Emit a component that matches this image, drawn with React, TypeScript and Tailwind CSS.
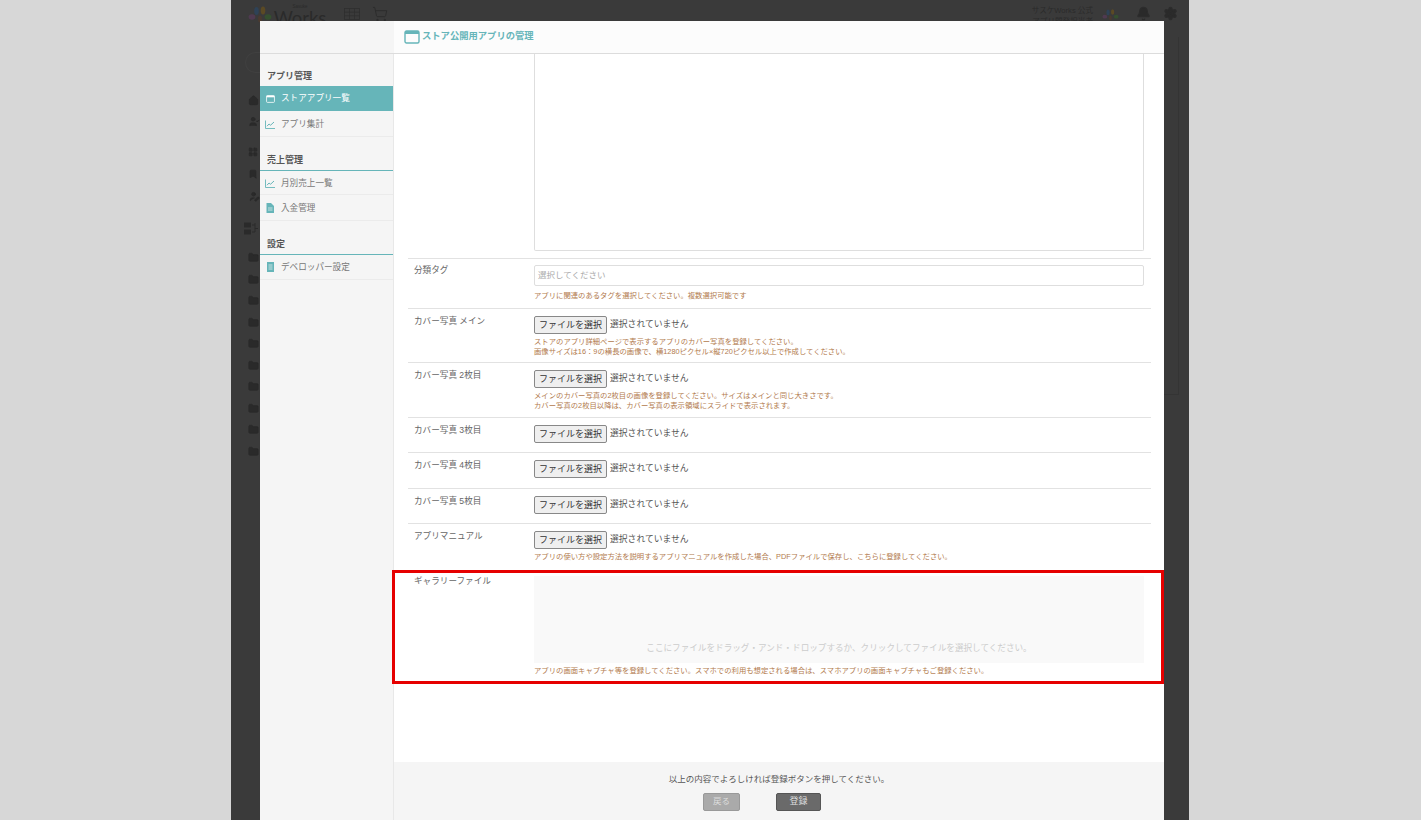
import type { ReactNode } from 'react';
import { Home, UserCheck, UserPen, Bookmark, LayoutGrid, Folder, Bell, Settings, ShoppingCart } from 'lucide-react';

const WindowIcon = ({ className }: { className: string }) => (
    <svg viewBox="0 0 16 14" className={className} fill="none">
        <rect x="1" y="1" width="14" height="12" rx="1.5" stroke="currentColor" strokeWidth="1.4" />
        <rect x="1" y="1" width="14" height="3" fill="currentColor" />
    </svg>
);

const ChartIcon = () => (
    <svg viewBox="0 0 10 9" className="h-[9px] w-[10px] text-[#66b5b9]" fill="none" stroke="currentColor">
        <path d="M0.5 0.5V8.5H10" strokeWidth="0.9" />
        <path d="M2 6.2L4 4L5.6 5.2L9 2" strokeWidth="1" />
    </svg>
);

const DocIcon = () => (
    <svg viewBox="0 0 8 10" className="h-[10px] w-[8px] text-[#66b5b9]">
        <path d="M0.5 0H5L8 3V10H0.5Z" fill="currentColor" />
        <path d="M2 5H6.5M2 7H6.5" stroke="#f5f5f5" strokeWidth="0.7" />
    </svg>
);

const LedgerIcon = () => (
    <svg viewBox="0 0 7 10" className="h-[10px] w-[7px] text-[#66b5b9]">
        <rect width="7" height="10" fill="currentColor" />
        <path d="M1.5 3H5.5M1.5 5H5.5M1.5 7H5.5" stroke="#f5f5f5" strokeWidth="0.7" />
    </svg>
);

// fan shaped logo, dimmed by the overlay
const Logo = ({ className }: { className: string }) => (
    <svg viewBox="0 0 24 18" className={className}>
        <ellipse cx="4" cy="12" rx="3.4" ry="2.8" fill="#4f3a50" />
        <ellipse cx="8.5" cy="6" rx="2.3" ry="4" fill="#2e4257" />
        <ellipse cx="15" cy="5.5" rx="2.3" ry="4" fill="#5b4a24" />
        <ellipse cx="20" cy="12" rx="3.4" ry="2.8" fill="#35502f" />
        <ellipse cx="12" cy="14" rx="2" ry="3.5" fill="#4a3a30" />
    </svg>
);

const OrgIcon = () => (
    <svg viewBox="0 0 14 13" className="h-[13px] w-[14px]" fill="#2a2a2a">
        <rect x="0" y="0.5" width="7" height="5" />
        <rect x="0" y="7.5" width="7" height="5" />
        <path d="M8 3H11M11 1V6.5M8 10H11V6.5H14" fill="none" stroke="#2a2a2a" />
    </svg>
);

function NavItem({ icon, label, active, className }: { icon: ReactNode; label: string; active?: boolean; className: string }) {
    return (
        <div className={`flex items-center ${className} ${active ? 'bg-[#66b5b9] text-white' : 'border-b border-[#ebebeb] text-[#777]'}`}>
            <span className="flex w-[21px] shrink-0 justify-center pl-[1px] pr-[2px]">{icon}</span>
            <span className="text-[8.6px]">{label}</span>
        </div>
    );
}

function NavHeading({ label, className }: { label: string; className: string }) {
    return <div className={`pl-[7px] text-[9px] leading-[11px] font-bold text-[#555] ${className}`}>{label}</div>;
}

function FileButton() {
    return (
        <div className="flex items-center">
            <button className="h-[18px] w-[73px] rounded-[2px] border border-[#888] bg-[#efefef] text-[9px] leading-none text-[#333]">
                ファイルを選択
            </button>
            <span className="ml-[3px] text-[8.8px] text-[#555]">選択されていません</span>
        </div>
    );
}

function Help({ lines, className = '' }: { lines: string[]; className?: string }) {
    return (
        <div className={`text-[7.35px] leading-[10px] text-[#b27a4d] ${className}`}>
            {lines.map((line) => (
                <p key={line}>{line}</p>
            ))}
        </div>
    );
}

function Label({ text }: { text: string }) {
    return <div className="w-[126px] shrink-0 pl-[6px] -mt-[1.5px] text-[8.6px] leading-[12px] text-[#666]">{text}</div>;
}

function Row({ label, children, className }: { label: string; children: ReactNode; className: string }) {
    return (
        <div className={`flex border-b border-[#e2e2e2] pt-[7px] ${className}`}>
            <Label text={label} />
            <div className="w-[610px]">{children}</div>
        </div>
    );
}

export default function App() {
    return (
        <div className="h-[820px] overflow-hidden bg-[#d7d7d7] font-['Liberation_Sans','Noto_Sans_CJK_JP',sans-serif]">
            <div className="relative ml-[231px] h-full w-[958px] bg-[#3a3a3a]">
                {/* Dimmed page behind the modal */}
                <div className="flex h-[21px] items-start text-[#2c2c2c]">
                    <Logo className="ml-[17px] mt-[5px] h-[18px] w-[24px]" />
                    <div className="ml-[5px] mt-[4px] flex w-[46px] flex-col items-center text-[#2a2a2a]">
                        <span className="h-[5px] text-[4.5px] leading-[5px]">Sasuke</span>
                        <span className="text-[18.5px] leading-[18px] font-['Lato',sans-serif]">Works</span>
                    </div>
                    <svg viewBox="0 0 16 12" className="ml-[21px] mt-[8px] h-[12px] w-[16px]" fill="none" stroke="#2e2e2e" strokeWidth="0.8">
                        <rect x="0.5" y="0.5" width="15" height="11" />
                        <path d="M5.5 0.5V11.5M10.5 0.5V11.5M0.5 4.2H15.5M0.5 7.8H15.5" />
                    </svg>
                    <ShoppingCart className="ml-[12px] mt-[6px] h-[16px] w-[16px]" strokeWidth={1.5} />
                    <div className="ml-auto mt-[5px] flex items-start">
                        <div className="text-right text-[7.6px] leading-[11px] text-[#2a2a2a]">
                            <p>サスケWorks 公式</p>
                            <p>アプリ開発担当者</p>
                        </div>
                        <Logo className="ml-[9px] mt-[3px] h-[13px] w-[17px]" />
                        <Bell className="ml-[17px] mt-[1px] h-[15px] w-[15px] fill-[#2a2a2a]" />
                        <Settings className="ml-[12px] mr-[11px] mt-[1px] h-[15px] w-[15px] fill-[#2a2a2a]" />
                    </div>
                </div>
                <div className="ml-[14px] flex w-[16px] flex-col items-center text-[#2a2a2a]">
                    <div className="mt-[31px] h-[21px] w-[16px] rounded-l-full border border-r-0 border-[#404040]" />
                    <Home className="mt-[22px] h-[11px] w-[11px] fill-[#2a2a2a]" />
                    <UserCheck className="mt-[10px] ml-[3px] h-[11px] w-[11px] fill-[#2a2a2a]" />
                    <LayoutGrid className="mt-[20px] h-[10px] w-[10px] fill-[#2a2a2a]" />
                    <Bookmark className="mt-[12px] h-[10px] w-[10px] fill-[#2a2a2a]" />
                    <UserPen className="mt-[12px] ml-[3px] h-[11px] w-[11px] fill-[#2a2a2a]" />
                    <div className="mt-[20px] -ml-[5px]">
                        <OrgIcon />
                    </div>
                    <div className="mt-[17px] flex flex-col gap-[10.55px]">
                        {[0, 1, 2, 3, 4, 5, 6, 7, 8, 9].map((n) => (
                            <Folder key={n} className="h-[11px] w-[11px] fill-[#2a2a2a]" />
                        ))}
                    </div>
                </div>
                {/* edge of the card behind the modal */}
                <div className="absolute right-[10px] top-[37px] h-[358px] w-[30px] border-b border-r border-[#343434]" />

                {/* Modal */}
                <div className="absolute bottom-0 left-[29px] top-[21px] flex w-[904px] flex-col bg-white">
                    <div className="flex h-[33px] shrink-0 border-b border-[#dcdcdc]">
                        <div className="w-[134px] bg-[#f5f5f5]" />
                        <div className="flex flex-1 items-center bg-[#fcfcfc] pl-[10px]">
                            <WindowIcon className="h-[14px] w-[16px] text-[#66b5b9]" />
                            <span className="ml-[2px] text-[9.3px] font-bold text-[#66b5b9]">ストア公開用アプリの管理</span>
                        </div>
                    </div>
                    <div className="flex min-h-0 flex-1">
                        <aside className="w-[134px] shrink-0 border-r border-[#e8e8e8] bg-[#f5f5f5]">
                            <NavHeading label="アプリ管理" className="mt-[17px] h-[15px]" />
                            <NavItem icon={<WindowIcon className="h-[8px] w-[9px]" />} label="ストアアプリ一覧" active className="h-[25px]" />
                            <NavItem icon={<ChartIcon />} label="アプリ集計" className="h-[26px] pt-[1px]" />
                            <NavHeading label="売上管理" className="mt-[18px] h-[15px] border-b border-[#66b5b9] box-content" />
                            <NavItem icon={<ChartIcon />} label="月別売上一覧" className="h-[24px] pt-[1px]" />
                            <NavItem icon={<DocIcon />} label="入金管理" className="h-[26px] pt-[1px]" />
                            <NavHeading label="設定" className="mt-[18px] h-[15px] border-b border-[#66b5b9] box-content" />
                            <NavItem icon={<LedgerIcon />} label="デベロッパー設定" className="h-[25px]" />
                        </aside>
                        <main className="flex min-w-0 flex-1 flex-col">
                            <div className="flex-1 pl-[14px] pr-[13px]">
                                <div className="flex border-b border-[#e2e2e2] pb-[7px]">
                                    <div className="ml-[126px] h-[197px] w-[610px] rounded-b-[2px] border border-t-0 border-[#dedede]" />
                                </div>
                                <Row label="分類タグ" className="h-[50px] !pt-[6px]">
                                    <div className="flex h-[21px] items-center rounded-[2px] border border-[#dedede] pl-[3px] text-[8.5px] text-[#aaa]">
                                        選択してください
                                    </div>
                                    <Help className="mt-[5px]" lines={['アプリに関連のあるタグを選択してください。複数選択可能です']} />
                                </Row>
                                <Row label="カバー写真 メイン" className="h-[54px]">
                                    <FileButton />
                                    <Help
                                        className="mt-[2.5px]"
                                        lines={[
                                            'ストアのアプリ詳細ページで表示するアプリのカバー写真を登録してください。',
                                            '画像サイズは16：9の横長の画像で、横1280ピクセル×縦720ピクセル以上で作成してください。',
                                        ]}
                                    />
                                </Row>
                                <Row label="カバー写真 2枚目" className="h-[55px]">
                                    <FileButton />
                                    <Help
                                        className="mt-[3px]"
                                        lines={[
                                            'メインのカバー写真の2枚目の画像を登録してください。サイズはメインと同じ大きさです。',
                                            'カバー写真の2枚目以降は、カバー写真の表示領域にスライドで表示されます。',
                                        ]}
                                    />
                                </Row>
                                <Row label="カバー写真 3枚目" className="h-[35px]">
                                    <FileButton />
                                </Row>
                                <Row label="カバー写真 4枚目" className="h-[36px]">
                                    <FileButton />
                                </Row>
                                <Row label="カバー写真 5枚目" className="h-[35px]">
                                    <FileButton />
                                </Row>
                                <div className="flex h-[46px] pt-[7px]">
                                    <Label text="アプリマニュアル" />
                                    <div className="w-[610px]">
                                        <FileButton />
                                        <Help
                                            className="mt-[3px]"
                                            lines={['アプリの使い方や設定方法を説明するアプリマニュアルを作成した場合、PDFファイルで保存し、こちらに登録してください。']}
                                        />
                                    </div>
                                </div>
                                {/* Highlighted row */}
                                <div className="-ml-[16px] -mr-[13px] flex h-[114px] border-[3px] border-[#e60000] pl-[19px] pt-[2px]">
                                    <div className="w-[120px] shrink-0 text-[8.6px] leading-[12px] text-[#666]">ギャラリーファイル</div>
                                    <div className="w-[610px]">
                                        <div className="mt-[1px] flex h-[87px] items-end justify-center bg-[#f9f9f9] pb-[9px] text-[8.6px] leading-[12px] text-[#ccc]">
                                            ここにファイルをドラッグ・アンド・ドロップするか、クリックしてファイルを選択してください。
                                        </div>
                                        <Help
                                            className="mt-[3px]"
                                            lines={['アプリの画面キャプチャ等を登録してください。スマホでの利用も想定される場合は、スマホアプリの画面キャプチャもご登録ください。']}
                                        />
                                    </div>
                                </div>
                            </div>
                            <div className="flex h-[58px] shrink-0 flex-col items-center bg-[#f5f5f5] pt-[11px]">
                                <p className="text-[8.5px] leading-[12px] text-[#555]">以上の内容でよろしければ登録ボタンを押してください。</p>
                                <div className="mt-[8px] mr-[34px] flex gap-[36px]">
                                    <button className="h-[18px] w-[37px] rounded-[2px] border border-[#999] bg-[#aaa] pb-[2px] text-[8.5px] text-[#ddd]">戻る</button>
                                    <button className="h-[18px] w-[45px] rounded-[2px] border border-[#555] bg-[#6a6a6a] text-[9px] text-[#ddd]">登録</button>
                                </div>
                            </div>
                        </main>
                    </div>
                </div>
            </div>
        </div>
    );
}
